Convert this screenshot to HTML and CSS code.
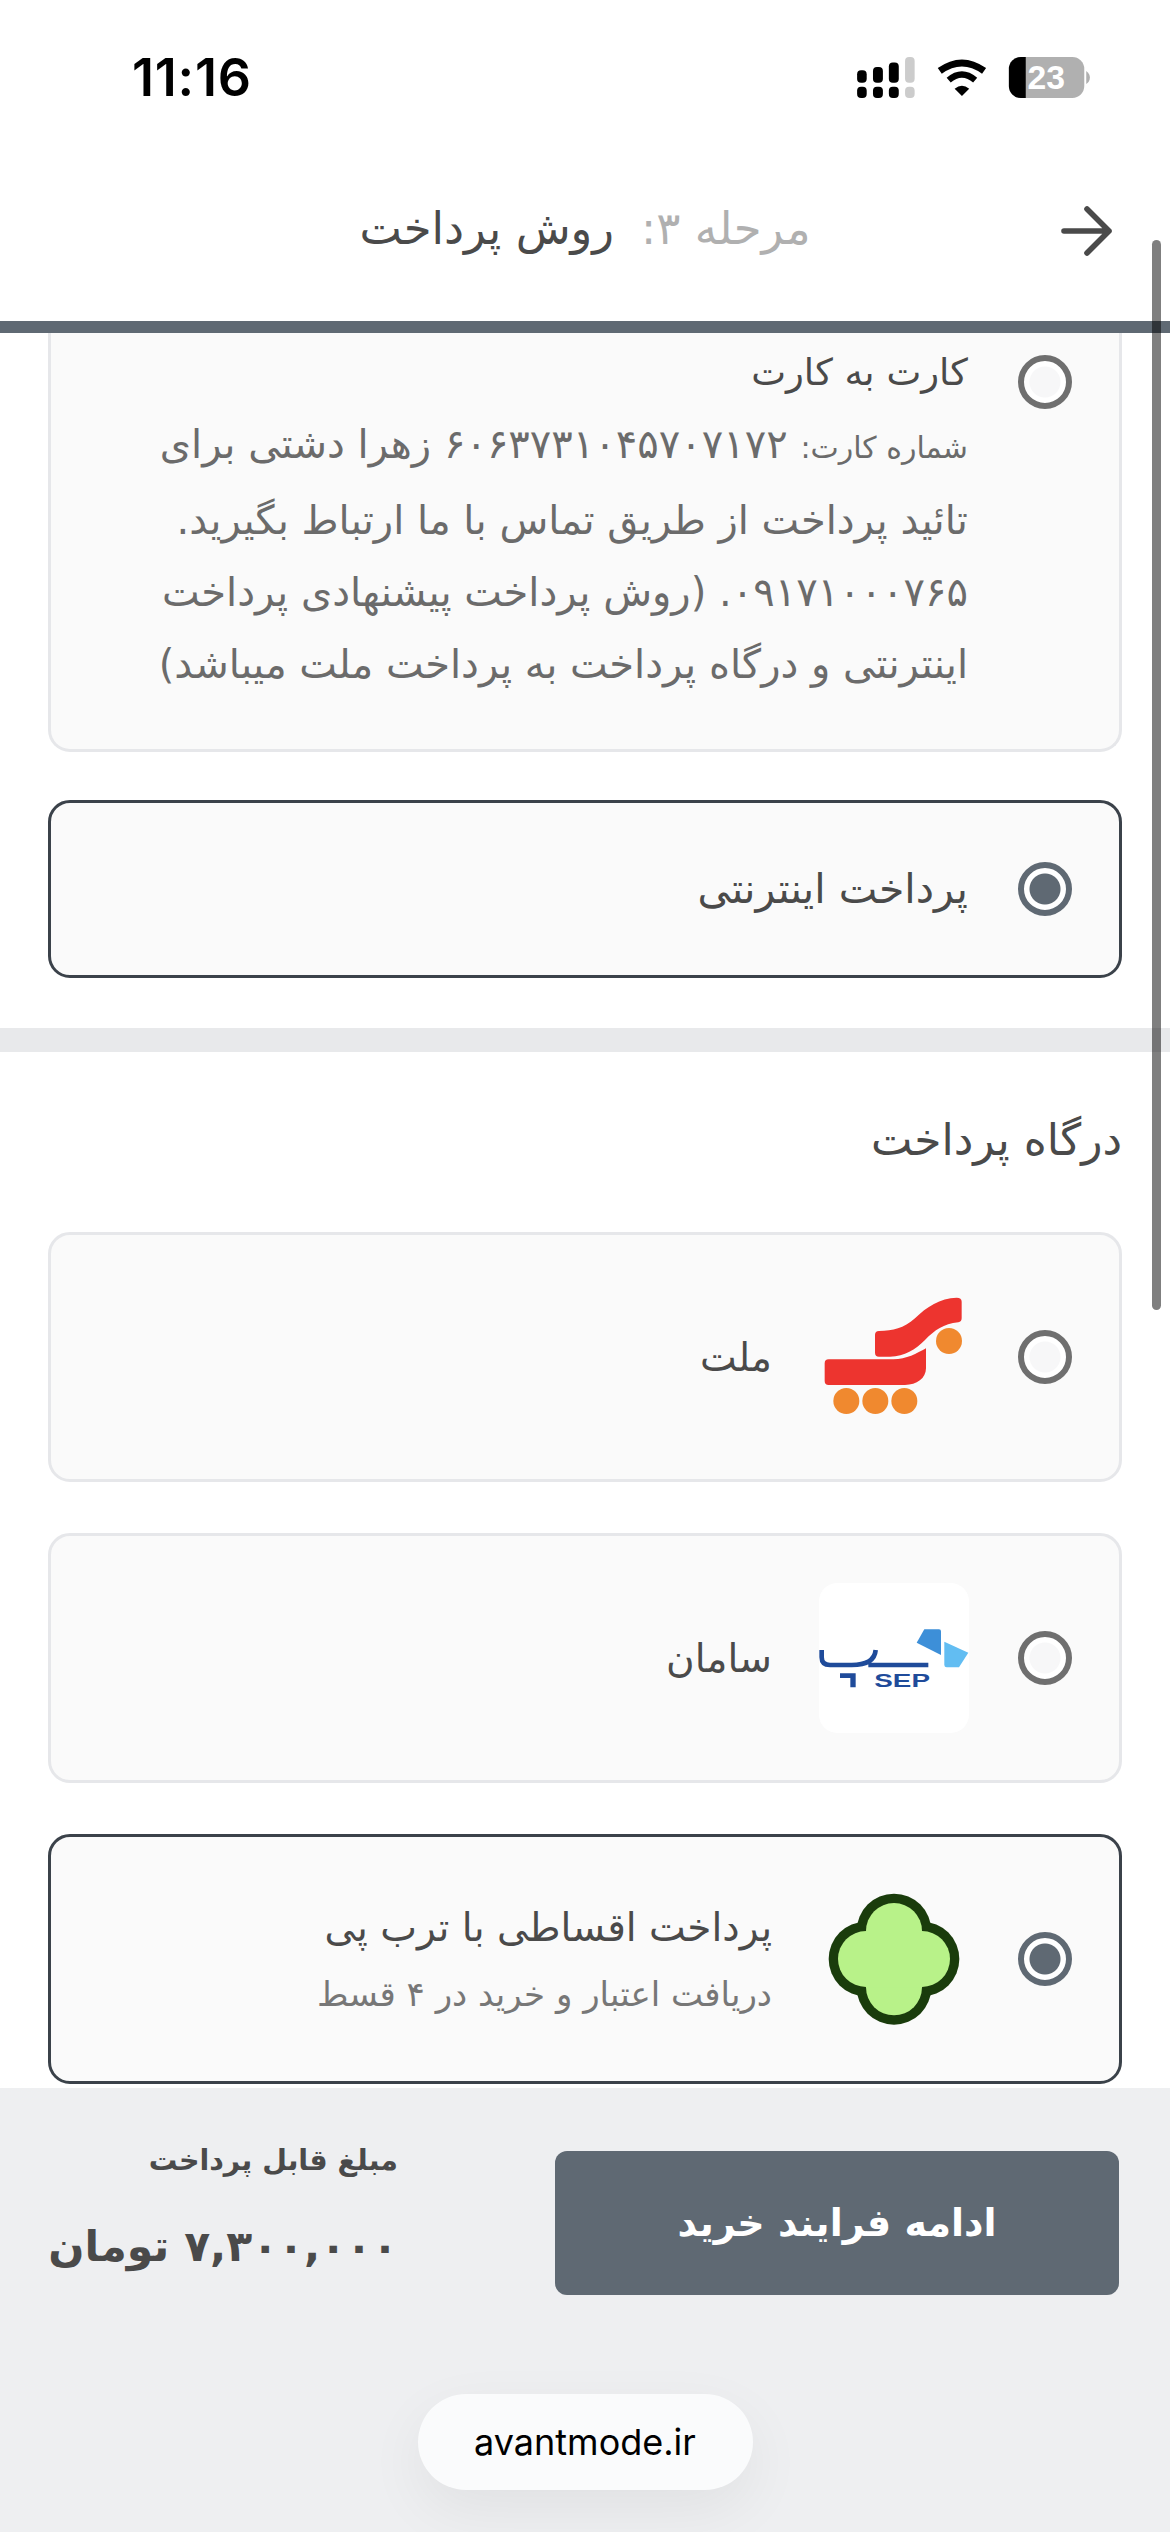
FILE: index.html
```html
<!DOCTYPE html>
<html lang="fa" dir="rtl">

<head>
    <meta charset="UTF-8">
    <meta name="viewport" content="width=device-width, initial-scale=1.0">
    <title>روش پرداخت</title>
    <link rel="stylesheet" href="styles.css">
</head>

<body>

    <div class="page">

        <div class="status-bar" dir="ltr">
            <div class="status-time">11:16</div>
            <svg class="status-icons" viewBox="108 80 704 124">
                <rect x="108" y="120" width="29" height="38" rx="12" fill="#000" />
                <rect x="156" y="110" width="30" height="48" rx="12" fill="#000" />
                <rect x="204" y="97" width="30" height="61" rx="12" fill="#000" />
                <rect x="253" y="80" width="29" height="78" rx="12" fill="#ccc" />
                <rect x="108" y="170" width="29" height="34" rx="12" fill="#000" />
                <rect x="156" y="170" width="30" height="34" rx="12" fill="#000" />
                <rect x="204" y="170" width="30" height="34" rx="12" fill="#000" />
                <rect x="253" y="170" width="29" height="34" rx="12" fill="#ccc" />
                <path d="M358 122 Q425 74 492 122" fill="none" stroke="#000" stroke-width="21" />
                <path d="M385 150 Q425 116 465 150" fill="none" stroke="#000" stroke-width="19" />
                <path d="M425 198 L403 176 Q425 158 447 176 Z" fill="#000" />
                <rect x="567" y="80" width="228" height="124" rx="36" fill="#b0b0b0" />
                <path d="M618 80 H603 A36 36 0 0 0 567 116 V168 A36 36 0 0 0 603 204 H618 Z" fill="#000" />
                <path d="M801 122 Q812 130 812 142 Q812 154 801 162 Z" fill="#b0b0b0" />
                <text class="battery-text" x="680" y="178">23</text>
            </svg>
        </div>

        <div class="header">
            <svg class="back-arrow" viewBox="0 0 58 58">
                <path d="M53 29 H8 M31 7 L53 29 L31 51" fill="none" stroke="#4a4a4a" stroke-width="5.6"
                    stroke-linecap="round" stroke-linejoin="round" />
            </svg>
            <div class="header-title">
                <span class="step">مرحله ۳:</span>
                <span>روش پرداخت</span>
            </div>
        </div>

        <div class="content">

            <div class="methods">
                <div class="option option-top">
                    <span class="radio radio-top"></span>
                    <div class="option-body">
                        <div class="option-title">کارت به کارت</div>
                        <div class="desc-line"><span class="desc-small">شماره کارت:</span> ۶۰۶۳۷۳۱۰۴۵۷۰۷۱۷۲ زهرا دشتی برای</div>
                        <div class="desc-line">تائید پرداخت از طریق تماس با ما ارتباط بگیرید.</div>
                        <div class="desc-line">۰۹۱۷۱۰۰۰۷۶۵. (روش پرداخت پیشنهادی پرداخت</div>
                        <div class="desc-line">اینترنتی و درگاه پرداخت به پرداخت ملت میباشد)</div>
                    </div>
                </div>

                <div class="option option-short selected">
                    <span class="radio checked"></span>
                    <div class="option-title">پرداخت اینترنتی</div>
                </div>
            </div>

            <div class="gateways">
                <div class="section-title">درگاه پرداخت</div>

                <div class="option option-gateway">
                    <span class="radio"></span>
                    <svg class="gateway-logo" viewBox="117 96 450 450">
                        <path d="M285 255 Q285 243 297 243 C340 243 370 235 405 205 C440 170 480 145 530 143 Q545 143 545 155 V205 Q545 215 535 217 C490 222 465 240 435 270 C405 300 375 318 330 320 H297 Q285 320 285 308 Z" fill="#ed342f" />
                        <path d="M134 340 Q134 328 146 328 H340 C380 328 410 310 438 295 V355 C438 385 410 405 375 405 H146 Q134 405 134 393 Z" fill="#ed342f" />
                        <circle cx="507" cy="273" r="39" fill="#f0892f" />
                        <circle cx="199" cy="453" r="39" fill="#f0892f" />
                        <circle cx="286" cy="453" r="39" fill="#f0892f" />
                        <circle cx="373" cy="453" r="39" fill="#f0892f" />
                    </svg>
                    <div class="option-title">ملت</div>
                </div>

                <div class="option option-gateway">
                    <span class="radio"></span>
                    <svg class="gateway-logo" viewBox="12 -81 450 450">
                        <rect x="12" y="-81" width="450" height="450" rx="55" fill="#fff" />
                        <path d="M305 98 L328 58 H372 Q378 58 378 64 V135 Z" fill="#3d8fd8" />
                        <path d="M388 95 L460 128 L432 172 H395 Q388 172 388 165 Z" fill="#62bdf2" />
                        <path d="M20 120 V142 Q20 165 45 165 H110 Q178 165 182 120 M160 165 H340" fill="none" stroke="#1f4b9a" stroke-width="14" />
                        <path d="M75 190 H122 V232 H106 V204 H75 Z" fill="#1f4b9a" />
                        <text class="sep-text" x="178" y="232" textLength="167" lengthAdjust="spacingAndGlyphs">SEP</text>
                    </svg>
                    <div class="option-title">سامان</div>
                </div>

                <div class="option option-gateway selected">
                    <span class="radio checked"></span>
                    <svg class="gateway-logo" viewBox="117 248 450 450">
                        <g fill="#1a3c0c">
                            <circle cx="342" cy="389" r="112" />
                            <circle cx="342" cy="558" r="112" />
                            <circle cx="258" cy="473" r="112" />
                            <circle cx="426" cy="473" r="112" />
                        </g>
                        <g fill="#b8f289">
                            <circle cx="342" cy="389" r="84" />
                            <circle cx="342" cy="558" r="84" />
                            <circle cx="258" cy="473" r="84" />
                            <circle cx="426" cy="473" r="84" />
                            <rect x="258" y="389" width="168" height="169" />
                        </g>
                    </svg>
                    <div class="option-body">
                        <div class="option-title">پرداخت اقساطی با ترب پی</div>
                        <div class="option-sub">دریافت اعتبار و خرید در ۴ قسط</div>
                    </div>
                </div>
            </div>

        </div>

        <div class="footer">
            <div class="footer-row">
                <button class="continue-btn">ادامه فرایند خرید</button>
                <div class="total">
                    <div class="total-label">مبلغ قابل پرداخت</div>
                    <div class="total-price">۷,۳۰۰,۰۰۰ تومان</div>
                </div>
            </div>
            <div class="url-pill">avantmode.ir</div>
        </div>

        <div class="scrollbar"></div>
    </div>

</body>

</html>
```

FILE: styles.css
```css
* {
    box-sizing: border-box;
}

body {
    margin: 0;
    font-family: "DejaVu Sans", "Noto Sans", sans-serif;
    color: #4a4a4a;
    background: #fff;
}

.page {
    position: relative;
    width: 1170px;
    height: 2532px;
    display: flex;
    flex-direction: column;
    overflow: hidden;
}

.status-bar {
    height: 142px;
    padding: 57px 79px 0 132px;
    display: flex;
    justify-content: space-between;
    align-items: flex-start;
}

.status-time {
    font-family: Inter, sans-serif;
    font-size: 52px;
    font-weight: 600;
    line-height: 42px;
    letter-spacing: 0.8px;
    color: #000;
}

.status-icons {
    width: 235px;
    height: 41px;
}

.battery-text {
    font-family: "Liberation Sans", sans-serif;
    font-size: 102px;
    font-weight: 700;
    fill: #fff;
    text-anchor: middle;
}

.header {
    position: relative;
    height: 191px;
    padding-top: 5px;
    padding-bottom: 12px;
    border-bottom: 12px solid #5f6973;
    display: flex;
    align-items: center;
    justify-content: center;
}

.back-arrow {
    position: absolute;
    right: 56px;
    top: 60px;
    width: 58px;
    height: 58px;
}

.header-title {
    display: flex;
    gap: 27px;
    font-size: 45px;
}

.step {
    color: #b0b0b0;
}

.content {
    flex: 1;
    overflow: hidden;
}

.methods {
    padding: 0 48px 50px;
    border-bottom: 24px solid #e8e9eb;
}

.option {
    display: flex;
    align-items: center;
    gap: 50px;
    padding: 0 47px 0 30px;
    background: #fafafa;
    border: 3px solid #e6e7ea;
    border-radius: 22px;
}

.option.selected {
    border-color: #3b424a;
}

.option-top {
    height: 419px;
    align-items: flex-start;
    border-top: none;
    border-radius: 0 0 22px 22px;
    padding-top: 17px;
}

.option-short {
    height: 178px;
    margin-top: 48px;
}

.option-gateway {
    height: 250px;
    margin-top: 51px;
}

.radio {
    flex: none;
    width: 54px;
    height: 54px;
    border: 6px solid #6f6f6f;
    border-radius: 50%;
    background: radial-gradient(circle, #f7f7f8 0 15px, #fff 16px);
}

.radio-top {
    margin-top: 5px;
}

.radio.checked {
    border-color: #5f6973;
    background: radial-gradient(circle, #5f6973 0 15px, #fff 16px);
}

.option-title {
    font-size: 39px;
    color: #4a4a4a;
}

.option-short .option-title {
    font-size: 41px;
}

.desc-line {
    font-size: 40px;
    line-height: 72px;
    white-space: nowrap;
    color: #6b6b6b;
}

.desc-small {
    font-size: 30px;
}

.option-top .option-title {
    font-size: 37px;
    line-height: 46px;
    margin-bottom: 12px;
}

.option-sub {
    margin-top: 24px;
    font-size: 34px;
    color: #777;
}

.gateways {
    padding: 52px 48px 0;
}

.section-title {
    font-size: 44px;
    line-height: 72px;
    padding-bottom: 5px;
}

.gateway-logo {
    flex: none;
    width: 150px;
    height: 150px;
    margin: 0 -1px 0 -3px;
}

.sep-text {
    font-family: "Liberation Sans", sans-serif;
    font-size: 56px;
    font-weight: 700;
    fill: #1f4b9a;
    direction: ltr;
}

.footer {
    height: 444px;
    background: #eeeff1;
    padding-top: 63px;
}

.footer-row {
    display: flex;
    justify-content: space-between;
    padding: 0 51px 0 48px;
}

.continue-btn {
    width: 564px;
    height: 144px;
    background: #5f6973;
    color: #fff;
    border: none;
    border-radius: 12px;
    font-family: inherit;
    font-size: 38px;
    font-weight: bold;
}

.total {
    width: 350px;
}

.total-label {
    font-size: 28.5px;
    font-weight: bold;
    line-height: 36px;
    margin-top: -8px;
}

.total-price {
    margin-top: 43px;
    font-size: 42.5px;
    font-weight: bold;
    white-space: nowrap;
}

.url-pill {
    width: 335px;
    height: 96px;
    margin: 99px auto 0;
    background: #fafbfc;
    border-radius: 48px;
    box-shadow: 0 20px 60px rgba(0, 0, 0, 0.06);
    display: flex;
    align-items: center;
    justify-content: center;
    font-family: Inter, sans-serif;
    font-size: 36px;
    color: #000;
}

.scrollbar {
    position: absolute;
    top: 240px;
    left: 1152px;
    width: 9px;
    height: 1070px;
    border-radius: 5px;
    background: rgba(0, 0, 0, 0.5);
}
```
